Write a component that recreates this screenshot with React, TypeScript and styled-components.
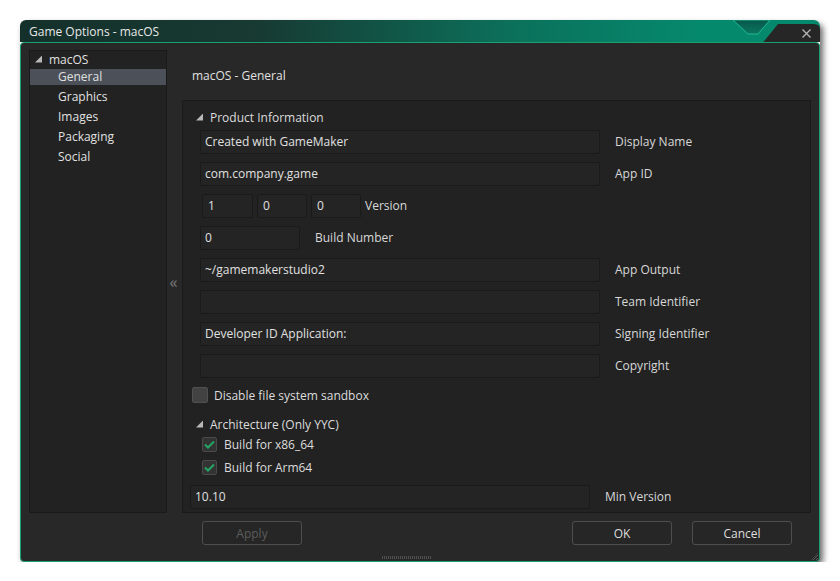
import React from 'react';
import styled, { createGlobalStyle } from 'styled-components';

const GlobalStyle = createGlobalStyle`
  html, body {
    margin: 0;
    padding: 0;
    background: #ffffff;
  }
  body {
    font-family: "Open Sans", "Liberation Sans", sans-serif;
    font-size: 12px;
    color: #dcdcdc;
  }
`;

const Page = styled.div`
  padding: 20px 0 0 20px;
`;

const Window = styled.div`
  position: relative;
  width: 800px;
  border-radius: 6px;
  box-shadow: 3px 4px 6px rgba(0, 0, 0, 0.6);
`;

const TitleBar = styled.div`
  position: relative;
  height: 22px;
  border-radius: 6px 6px 0 0;
  background: linear-gradient(to right, #15302b 0%, #173a33 30%, #0b715b 62%, #05896d 85%, #05896d 100%);
  display: flex;
  align-items: center;
`;

const Title = styled.span`
  padding-left: 9px;
  color: #e8e8e8;
  font-size: 12px;
`;

const TitleDecor = styled.svg`
  position: absolute;
  top: 0;
  right: 0;
`;

const Body = styled.div`
  position: relative;
  box-sizing: border-box;
  height: 520px;
  border: 1px solid #1a9f6e;
  border-radius: 4px;
  background: #282828;
  padding: 7px 7px 0 8px;
  display: flex;
  flex-direction: column;
`;

const MainRow = styled.div`
  display: flex;
  height: 463px;
`;

const Tree = styled.div`
  box-sizing: border-box;
  width: 138px;
  border: 1px solid #1a1a1a;
  background: #222222;
`;

const TreeRoot = styled.div`
  display: flex;
  align-items: center;
  height: 16px;
  padding-left: 5px;
  gap: 7px;
  color: #e0e0e0;
`;

const Triangle = styled.span`
  display: inline-block;
  width: 7px;
  height: 7px;
  background: #b8b8b8;
  clip-path: polygon(100% 0, 100% 100%, 0 100%);
`;

const TreeItem = styled.div<{ $selected?: boolean }>`
  box-sizing: border-box;
  height: 20px;
  padding: 2px 0;
  text-indent: 28px;
  line-height: 16px;
  background: ${({ $selected }) => ($selected ? '#4b5059' : 'transparent')};
  background-clip: content-box;
  color: #e0e0e0;
`;

const Gutter = styled.div`
  width: 15px;
  display: flex;
  align-items: center;
  justify-content: center;
  color: #7a7a7a;
  font-size: 16px;
  padding-right: 2px;
  box-sizing: border-box;
`;

const RightCol = styled.div`
  width: 629px;
  display: flex;
  flex-direction: column;
`;

const Heading = styled.div`
  height: 50px;
  padding-left: 10px;
  display: flex;
  align-items: center;
  color: #e0e0e0;
`;

const Panel = styled.div`
  flex: 1;
  box-sizing: border-box;
  border: 1px solid #1a1a1a;
  background: #222222;
  padding-top: 7px;
  display: flex;
  flex-direction: column;
`;

const SectionHeader = styled.div<{ $mt?: number }>`
  display: flex;
  align-items: center;
  gap: 7px;
  height: 18px;
  margin-left: 13px;
  margin-top: ${({ $mt }) => $mt ?? 0}px;
  color: #dcdcdc;
`;

const Fields = styled.div`
  margin-top: 4px;
  padding-left: 17px;
  display: flex;
  flex-direction: column;
  gap: 8px;
`;

const FieldRow = styled.div<{ $indent?: number; $mt?: number }>`
  display: flex;
  align-items: center;
  height: 24px;
  padding-left: ${({ $indent }) => $indent ?? 0}px;
  margin-top: ${({ $mt }) => $mt ?? 0}px;
`;

const Input = styled.div<{ $w: number; $pl?: number }>`
  box-sizing: border-box;
  width: ${({ $w }) => $w}px;
  height: 24px;
  border: 1px solid #1a1a1a;
  border-radius: 2px;
  background: #242424;
  padding-left: ${({ $pl }) => $pl ?? 4}px;
  line-height: 21px;
  color: #e0e0e0;
  white-space: nowrap;
  overflow: hidden;
`;

const VersionInputs = styled.div`
  display: flex;
  gap: 4px;
  margin-left: 2px;
`;

const Label = styled.span<{ $ml?: number }>`
  margin-left: ${({ $ml }) => $ml ?? 15}px;
  margin-bottom: 2px;
  color: #d8d8d8;
`;

const CheckRow = styled.label<{ $indent: number; $mt: number; $gap: number }>`
  display: flex;
  align-items: center;
  height: 18px;
  padding-left: ${({ $indent }) => $indent}px;
  margin-top: ${({ $mt }) => $mt}px;
  gap: ${({ $gap }) => $gap}px;
  color: #dcdcdc;
`;

const Box = styled.span<{ $size: number; $checked?: boolean }>`
  box-sizing: border-box;
  width: ${({ $size }) => $size}px;
  height: ${({ $size }) => $size}px;
  border: 1px solid ${({ $checked }) => ($checked ? '#4a4a4a' : '#505050')};
  border-radius: 2px;
  background: ${({ $checked }) => ($checked ? '#333333' : '#424242')};
  display: flex;
  align-items: center;
  justify-content: center;
`;

const Footer = styled.div`
  display: flex;
  align-items: center;
  margin-top: 8px;
  padding: 0 20px 0 173px;
`;

const Button = styled.div<{ $disabled?: boolean }>`
  box-sizing: border-box;
  width: 100px;
  height: 24px;
  border: 1px solid #4e4e4e;
  border-radius: 3px;
  background: #262626;
  display: flex;
  align-items: center;
  justify-content: center;
  color: ${({ $disabled }) => ($disabled ? '#5c5c5c' : '#dedede')};
`;

const Spacer = styled.div`
  flex: 1;
`;

const ButtonGap = styled.div`
  width: 20px;
`;

const Grip = styled.div`
  position: absolute;
  left: 361px;
  bottom: 2px;
  width: 49px;
  height: 3px;
  background: repeating-linear-gradient(to right, #5a5a5a 0 1px, transparent 1px 2px);
  opacity: 0.8;
`;

const CornerGrip = styled.div`
  position: absolute;
  right: 1px;
  bottom: 1px;
  width: 7px;
  height: 7px;
  background: repeating-linear-gradient(135deg, #5a5a5a 0 1px, transparent 1px 2px);
  clip-path: polygon(100% 0, 100% 100%, 0 100%);
`;

const Check = () => (
  <svg width="11" height="9" viewBox="0 0 11 9">
    <path d="M1 4.5 L4 7.5 L10 1.5" fill="none" stroke="#22a565" strokeWidth="2" />
  </svg>
);

export default function App() {
  return (
    <>
      <GlobalStyle />
      <Page>
        <Window>
          <TitleBar>
            <Title>Game Options - macOS</Title>
            <TitleDecor width="90" height="22" viewBox="710 0 90 22">
              <defs>
                <linearGradient id="notch" x1="0" y1="0" x2="0" y2="1">
                  <stop offset="0" stopColor="#07584a" />
                  <stop offset="1" stopColor="#0c7560" />
                </linearGradient>
              </defs>
              <path d="M713 0 L750 0 L738 14 L728 14 Z" fill="url(#notch)" stroke="#1fb98f" strokeWidth="1" />
              <path d="M743 22.5 L758 4 L794 4 Q800 4 800 10 L800 22.5 Z" fill="#262626" />
              <path d="M782.5 9.5 L790.5 17.5 M790.5 9.5 L782.5 17.5" stroke="#b4b4b4" strokeWidth="1.3" />
            </TitleDecor>
          </TitleBar>
          <Body>
            <MainRow>
              <Tree>
                <TreeRoot>
                  <Triangle />
                  macOS
                </TreeRoot>
                <TreeItem $selected>General</TreeItem>
                <TreeItem>Graphics</TreeItem>
                <TreeItem>Images</TreeItem>
                <TreeItem>Packaging</TreeItem>
                <TreeItem>Social</TreeItem>
              </Tree>
              <Gutter>«</Gutter>
              <RightCol>
                <Heading>macOS - General</Heading>
                <Panel>
                  <SectionHeader>
                    <Triangle />
                    Product Information
                  </SectionHeader>
                  <Fields>
                    <FieldRow>
                      <Input $w={400}>Created with GameMaker</Input>
                      <Label>Display Name</Label>
                    </FieldRow>
                    <FieldRow>
                      <Input $w={400}>com.company.game</Input>
                      <Label>App ID</Label>
                    </FieldRow>
                    <FieldRow>
                      <VersionInputs>
                        <Input $w={51} $pl={5}>1</Input>
                        <Input $w={50} $pl={5}>0</Input>
                        <Input $w={50} $pl={5}>0</Input>
                      </VersionInputs>
                      <Label $ml={4}>Version</Label>
                    </FieldRow>
                    <FieldRow>
                      <Input $w={100}>0</Input>
                      <Label>Build Number</Label>
                    </FieldRow>
                    <FieldRow>
                      <Input $w={400}>~/gamemakerstudio2</Input>
                      <Label>App Output</Label>
                    </FieldRow>
                    <FieldRow>
                      <Input $w={400} />
                      <Label>Team Identifier</Label>
                    </FieldRow>
                    <FieldRow>
                      <Input $w={400}>Developer ID Application:</Input>
                      <Label>Signing Identifier</Label>
                    </FieldRow>
                    <FieldRow>
                      <Input $w={400} />
                      <Label>Copyright</Label>
                    </FieldRow>
                  </Fields>
                  <CheckRow $indent={9} $mt={8} $gap={6}>
                    <Box $size={16} />
                    Disable file system sandbox
                  </CheckRow>
                  <SectionHeader $mt={11}>
                    <Triangle />
                    Architecture (Only YYC)
                  </SectionHeader>
                  <CheckRow $indent={19} $mt={2} $gap={7}>
                    <Box $size={15} $checked>
                      <Check />
                    </Box>
                    Build for x86_64
                  </CheckRow>
                  <CheckRow $indent={19} $mt={5} $gap={7}>
                    <Box $size={15} $checked>
                      <Check />
                    </Box>
                    Build for Arm64
                  </CheckRow>
                  <FieldRow $indent={7} $mt={9}>
                    <Input $w={400}>10.10</Input>
                    <Label>Min Version</Label>
                  </FieldRow>
                </Panel>
              </RightCol>
            </MainRow>
            <Footer>
              <Button $disabled>Apply</Button>
              <Spacer />
              <Button>OK</Button>
              <ButtonGap />
              <Button>Cancel</Button>
            </Footer>
            <Grip />
            <CornerGrip />
          </Body>
        </Window>
      </Page>
    </>
  );
}
